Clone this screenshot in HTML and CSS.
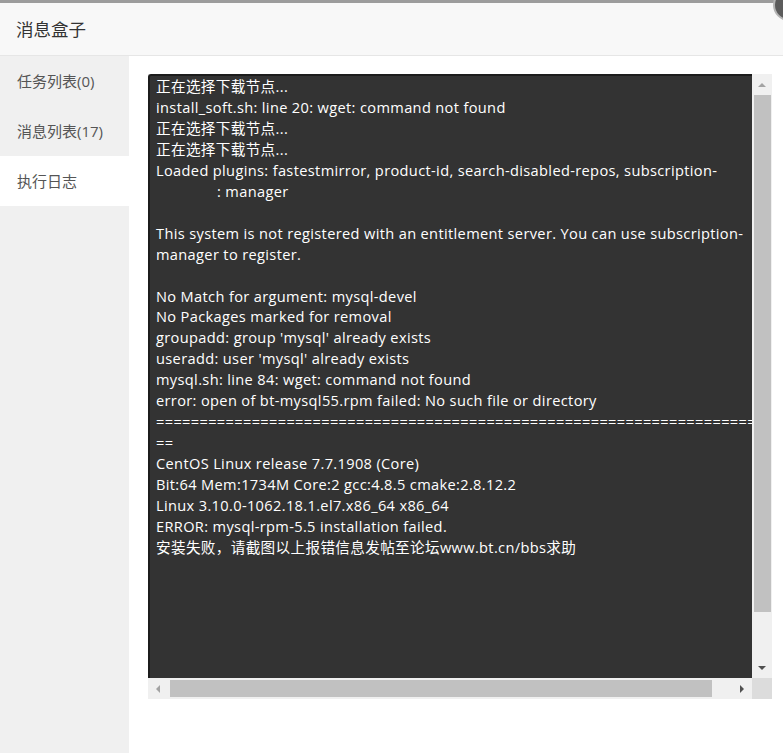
FILE: index.html
```html
<!DOCTYPE html>
<html lang="zh-CN">
<head>
    <meta charset="UTF-8">
    <title>消息盒子</title>
    <link rel="stylesheet" href="styles.css">
</head>
<body>

<div class="layer">
    <div class="layer-title">消息盒子</div>
    <span class="layer-close"></span>
    <div class="layer-body">
        <ul class="tab-nav">
            <li class="tab-item">任务列表(0)</li>
            <li class="tab-item">消息列表(17)</li>
            <li class="tab-item active">执行日志</li>
        </ul>
        <div class="tab-con">
            <div class="log-box">
                <div class="log-view">
<pre class="log-text">正在选择下载节点...
install_soft.sh: line 20: wget: command not found
正在选择下载节点...
正在选择下载节点...
Loaded plugins: fastestmirror, product-id, search-disabled-repos, subscription-
<span class="indent">: manager</span>

This system is not registered with an entitlement server. You can use subscription-
manager to register.

No Match for argument: mysql-devel
No Packages marked for removal
groupadd: group 'mysql' already exists
useradd: user 'mysql' already exists
mysql.sh: line 84: wget: command not found
error: open of bt-mysql55.rpm failed: No such file or directory
========================================================================
==
CentOS Linux release 7.7.1908 (Core)
Bit:64 Mem:1734M Core:2 gcc:4.8.5 cmake:2.8.12.2
Linux 3.10.0-1062.18.1.el7.x86_64 x86_64
ERROR: mysql-rpm-5.5 installation failed.
安装失败，请截图以上报错信息发帖至论坛www.bt.cn/bbs求助</pre>
                </div>
                <div class="vbar">
                    <div class="sb-btn"><i class="arrow up"></i></div>
                    <div class="v-track"><div class="v-thumb"></div></div>
                    <div class="sb-btn"><i class="arrow down"></i></div>
                </div>
                <div class="hbar">
                    <div class="sb-btn"><i class="arrow left"></i></div>
                    <div class="h-track"><div class="h-thumb"></div></div>
                    <div class="sb-btn"><i class="arrow right"></i></div>
                </div>
                <div class="sb-corner"></div>
            </div>
        </div>
    </div>
</div>

</body>
</html>
```

FILE: styles.css
```css
html, body {
    margin: 0;
    height: 100%;
}
body {
    font-family: "Open Sans", "Noto Sans CJK SC", sans-serif;
    background-color: #fff;
    overflow: hidden;
}
.layer {
    position: relative;
    height: 100%;
    display: flex;
    flex-direction: column;
    border-top: 3px solid #9c9c9c;
    box-sizing: border-box;
}
.layer-title {
    height: 52px;
    line-height: 52px;
    padding-left: 16px;
    font-size: 17.5px;
    color: #333;
    background-color: #f8f8f8;
    border-bottom: 1px solid #e6e6e6;
}
.layer-close {
    position: absolute;
    left: 773px;
    top: -14px;
    width: 28px;
    height: 28px;
    border-radius: 50%;
    background-color: #5c5c5c;
    border: 2px solid #b5b5b5;
}
.layer-body {
    flex: 1;
    display: flex;
}
.tab-nav {
    width: 129px;
    margin: 0;
    padding: 0;
    list-style: none;
    background-color: #f0f0f0;
}
.tab-item {
    height: 50px;
    line-height: 50px;
    padding-left: 17px;
    font-size: 15px;
    color: #555;
}
.tab-item.active {
    background-color: #fff;
}
.tab-con {
    flex: 1;
    padding: 18px 0 0 19px;
}
.log-box {
    width: 624px;
    display: grid;
    grid-template-columns: 604px 20px;
    grid-template-rows: 604px 21px;
}
.log-view {
    background-color: #333;
    border-left: 2px solid #1c1c1c;
    border-top: 2px solid #1c1c1c;
    border-top-left-radius: 3px;
    overflow: hidden;
}
.log-text {
    margin: 0;
    padding: 0 0 0 6px;
    font-family: "Open Sans", "Noto Sans CJK SC", sans-serif;
    font-size: 14.6px;
    letter-spacing: 0.35px;
    line-height: 20.95px;
    color: #fff;
    white-space: pre;
}
.indent {
    padding-left: 61px;
}
.vbar {
    display: flex;
    flex-direction: column;
    background-color: #f0f0f0;
}
.vbar .sb-btn {
    height: 21px;
}
.v-track {
    flex: 1;
}
.v-thumb {
    height: 517px;
    margin: 0 1px 0 2px;
    background-color: #c1c1c1;
}
.hbar {
    display: flex;
    background-color: #f0f0f0;
}
.hbar .sb-btn {
    width: 20px;
}
.h-track {
    flex: 1;
    padding: 2px 0;
}
.h-thumb {
    width: 542px;
    height: 100%;
    margin-left: 2px;
    background-color: #c1c1c1;
}
.sb-btn {
    display: flex;
    justify-content: center;
    align-items: center;
}
.arrow {
    width: 0;
    height: 0;
    border: 4px solid transparent;
}
.arrow.up {
    border-bottom-color: #a3a3a3;
    border-top-width: 0;
}
.arrow.down {
    border-top-color: #505050;
    border-bottom-width: 0;
}
.arrow.left {
    border-right-color: #a3a3a3;
    border-left-width: 0;
}
.arrow.right {
    border-left-color: #505050;
    border-right-width: 0;
}
.sb-corner {
    background-color: #dcdcdc;
}
```
